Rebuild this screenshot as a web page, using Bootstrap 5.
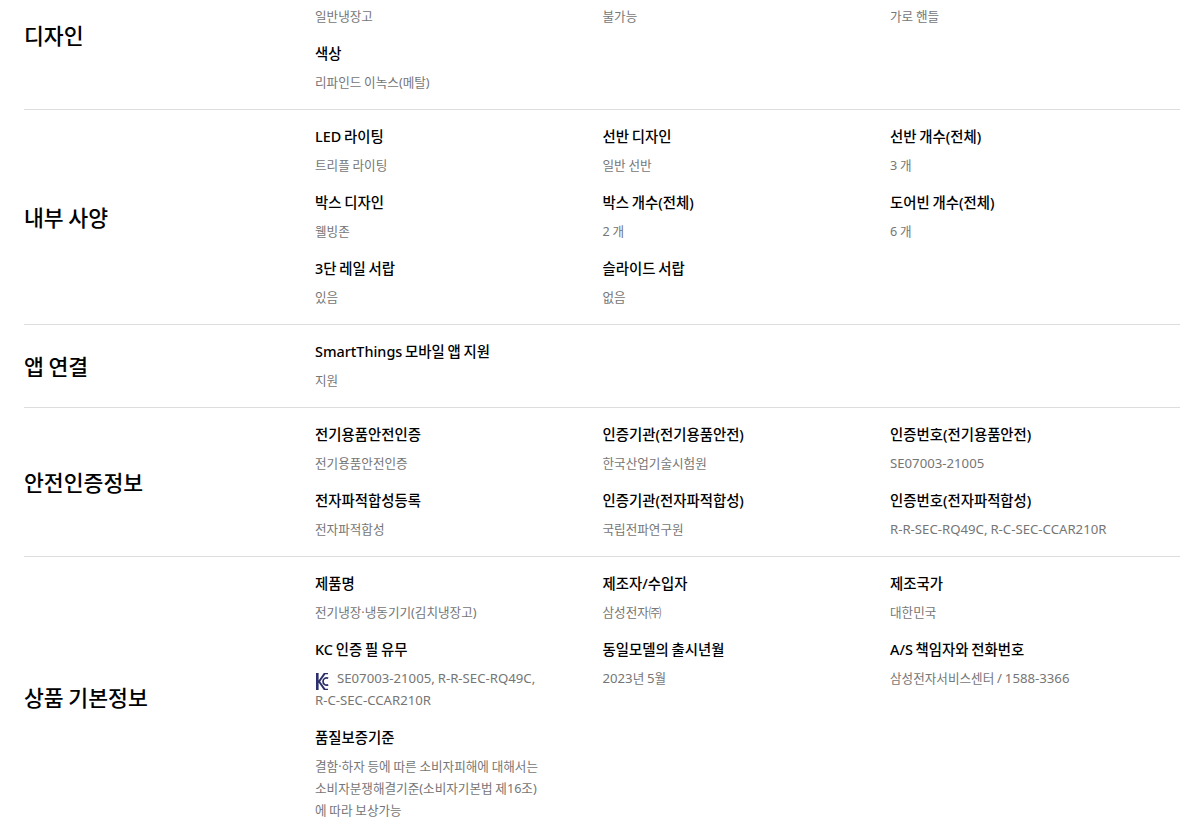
<!DOCTYPE html>
<html lang="ko">
<head>
<meta charset="utf-8">
<title>제품 사양</title>
<link href="https://cdn.jsdelivr.net/npm/bootstrap@5.3.0/dist/css/bootstrap.min.css" rel="stylesheet">
<style>
html, body { height: 824px; overflow: hidden; background: #fff; }
body { font-family: "Noto Sans", "Noto Sans CJK KR", sans-serif; color: #000; }
.spec-list { margin: -39px 20px 0 24px; }
.spec-group { border-bottom: 1px solid #ddd; padding: 17px 0 15px; }
.spec-name { flex: 0 0 291px; margin: 0; font-size: 21.6px; font-weight: 500; word-spacing: -1px; color: #000; }
.spec-items { flex: 0 0 862.5px; width: 862.5px; row-gap: 16px; }
.spec-title { font-size: 14.4px; line-height: 20px; font-weight: 500; word-spacing: -1px; margin-bottom: 8px; color: #000; }
.spec-value { font-size: 12.6px; line-height: 22px; word-spacing: -.5px; color: #767676; }
.spec-latin { font-size: 13.2px; line-height: 1; }
.spec-narrow { padding-right: 60px; }
.kc-mark { width: 14px; height: 17px; margin: -4px 8px -4px 0; vertical-align: -3px; }
</style>
</head>
<body>
<div class="spec-list">

  <section class="spec-group d-flex align-items-center">
    <h3 class="spec-name">디자인</h3>
    <div class="spec-items row row-cols-3 gx-0">
      <div class="col"><div class="spec-title">&nbsp;</div><div class="spec-value">일반냉장고</div></div>
      <div class="col"><div class="spec-title">&nbsp;</div><div class="spec-value">불가능</div></div>
      <div class="col"><div class="spec-title">&nbsp;</div><div class="spec-value">가로 핸들</div></div>
      <div class="col"><div class="spec-title">색상</div><div class="spec-value">리파인드 이녹스(메탈)</div></div>
    </div>
  </section>

  <section class="spec-group d-flex align-items-center">
    <h3 class="spec-name">내부 사양</h3>
    <div class="spec-items row row-cols-3 gx-0">
      <div class="col"><div class="spec-title">LED 라이팅</div><div class="spec-value">트리플 라이팅</div></div>
      <div class="col"><div class="spec-title">선반 디자인</div><div class="spec-value">일반 선반</div></div>
      <div class="col"><div class="spec-title">선반 개수(전체)</div><div class="spec-value">3 개</div></div>
      <div class="col"><div class="spec-title">박스 디자인</div><div class="spec-value">웰빙존</div></div>
      <div class="col"><div class="spec-title">박스 개수(전체)</div><div class="spec-value">2 개</div></div>
      <div class="col"><div class="spec-title">도어빈 개수(전체)</div><div class="spec-value">6 개</div></div>
      <div class="col"><div class="spec-title">3단 레일 서랍</div><div class="spec-value">있음</div></div>
      <div class="col"><div class="spec-title">슬라이드 서랍</div><div class="spec-value">없음</div></div>
    </div>
  </section>

  <section class="spec-group d-flex align-items-center">
    <h3 class="spec-name">앱 연결</h3>
    <div class="spec-items row row-cols-3 gx-0">
      <div class="col"><div class="spec-title">SmartThings 모바일 앱 지원</div><div class="spec-value">지원</div></div>
    </div>
  </section>

  <section class="spec-group d-flex align-items-center">
    <h3 class="spec-name">안전인증정보</h3>
    <div class="spec-items row row-cols-3 gx-0">
      <div class="col"><div class="spec-title">전기용품안전인증</div><div class="spec-value">전기용품안전인증</div></div>
      <div class="col"><div class="spec-title">인증기관(전기용품안전)</div><div class="spec-value">한국산업기술시험원</div></div>
      <div class="col"><div class="spec-title">인증번호(전기용품안전)</div><div class="spec-value"><span class="spec-latin">SE07003-21005</span></div></div>
      <div class="col"><div class="spec-title">전자파적합성등록</div><div class="spec-value">전자파적합성</div></div>
      <div class="col"><div class="spec-title">인증기관(전자파적합성)</div><div class="spec-value">국립전파연구원</div></div>
      <div class="col"><div class="spec-title">인증번호(전자파적합성)</div><div class="spec-value"><span class="spec-latin">R-R-SEC-RQ49C, R-C-SEC-CCAR210R</span></div></div>
    </div>
  </section>

  <section class="spec-group d-flex align-items-center">
    <h3 class="spec-name">상품 기본정보</h3>
    <div class="spec-items row row-cols-3 gx-0">
      <div class="col"><div class="spec-title">제품명</div><div class="spec-value">전기냉장·냉동기기(김치냉장고)</div></div>
      <div class="col"><div class="spec-title">제조자/수입자</div><div class="spec-value">삼성전자㈜</div></div>
      <div class="col"><div class="spec-title">제조국가</div><div class="spec-value">대한민국</div></div>
      <div class="col"><div class="spec-title">KC 인증 필 유무</div><div class="spec-value spec-narrow"><svg class="kc-mark" viewBox="0 0 14 17" aria-label="KC"><path d="M1 0h2.6v17H1zM13 0v1.2H10.4L5.2 8.5l5.2 7.3H13V17H8.8L3.6 9.6V7.4L8.8 0z" fill="#2b2f6b"/><path d="M13.2 5.2A3.6 3.6 0 0 0 8 8.5a3.6 3.6 0 0 0 5.2 3.3" fill="none" stroke="#2b2f6b" stroke-width="1.7"/></svg><span class="spec-latin">SE07003-21005, R-R-SEC-RQ49C, R-C-SEC-CCAR210R</span></div></div>
      <div class="col"><div class="spec-title">동일모델의 출시년월</div><div class="spec-value"><span class="spec-latin">2023</span>년 <span class="spec-latin">5</span>월</div></div>
      <div class="col"><div class="spec-title">A/S 책임자와 전화번호</div><div class="spec-value">삼성전자서비스센터 <span class="spec-latin">/ 1588-3366</span></div></div>
      <div class="col"><div class="spec-title">품질보증기준</div><div class="spec-value spec-narrow">결함·하자 등에 따른 소비자피해에 대해서는 소비자분쟁해결기준(소비자기본법 제16조)<br>에 따라 보상가능</div></div>
    </div>
  </section>

</div>
<script src="https://cdn.jsdelivr.net/npm/bootstrap@5.3.0/dist/js/bootstrap.bundle.min.js"></script>
</body>
</html>
